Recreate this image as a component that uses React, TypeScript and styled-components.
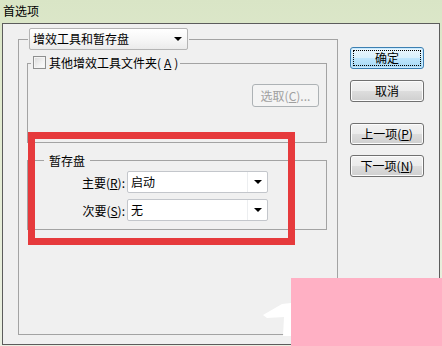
import * as React from 'react'
import styled, { createGlobalStyle } from 'styled-components'

const GlobalStyle = createGlobalStyle`
  html, body {
    margin: 0;
    padding: 0;
  }
  body {
    width: 442px;
    height: 346px;
    overflow: hidden;
    font-family: "Noto Sans CJK SC", "Noto Sans", sans-serif;
    font-size: 12px;
    color: #000;
  }
`

export default function App() {
  return (
    <Window>
      <GlobalStyle />
      <TitleBar>首选项</TitleBar>
      <Client>
        <MainGroup>
          <GroupLegend $inset={9} $pad={1}>
            <HeaderCombo>
              增效工具和暂存盘
              <Arrow $big />
            </HeaderCombo>
          </GroupLegend>
          <MainBody>
            <PluginGroup>
              <GroupLegend $inset={3} $pad={2}>
                <CheckLabel>
                  <CheckBox />
                  其他增效工具文件夹(<u>A</u>)
                </CheckLabel>
              </GroupLegend>
              <PluginBody>
                <SmallButton disabled>
                  选取(<u>C</u>)...
                </SmallButton>
              </PluginBody>
            </PluginGroup>
            <ScratchGroup>
              <GroupLegend $inset={16} $pad={5}>
                <LegendText>暂存盘</LegendText>
              </GroupLegend>
              <ScratchBody>
                <DiskRow>
                  <DiskLabel>
                    主要(<u>R</u>):
                  </DiskLabel>
                  <Combo>
                    <ComboText>启动</ComboText>
                    <ComboButton>
                      <Arrow />
                    </ComboButton>
                  </Combo>
                </DiskRow>
                <DiskRow>
                  <DiskLabel>
                    次要(<u>S</u>):
                  </DiskLabel>
                  <Combo>
                    <ComboText>无</ComboText>
                    <ComboButton>
                      <Arrow />
                    </ComboButton>
                  </Combo>
                </DiskRow>
              </ScratchBody>
            </ScratchGroup>
          </MainBody>
        </MainGroup>
        <ButtonColumn>
          <DialogButton $default $top={0}>
            <ButtonFace $focus>确定</ButtonFace>
          </DialogButton>
          <DialogButton $top={11}>
            <ButtonFace>取消</ButtonFace>
          </DialogButton>
          <DialogButton $top={21}>
            <ButtonFace>
              上一项(<u>P</u>)
            </ButtonFace>
          </DialogButton>
          <DialogButton $top={10}>
            <ButtonFace>
              下一项(<u>N</u>)
            </ButtonFace>
          </DialogButton>
        </ButtonColumn>
      </Client>
      <Highlight />
      <PinkPatch />
      <Watermark width="30" height="40" viewBox="0 0 30 40">
        <polygon points="1,15 20,4 29,3 29,36 21,36 22,17 5,18" fill="#fff" />
      </Watermark>
    </Window>
  )
}

const Window = styled.div`
  position: relative;
  width: 442px;
  height: 346px;
  display: flex;
  flex-direction: column;
  box-sizing: border-box;
  padding: 0 2px 1px 2px;
  background: linear-gradient(180deg, #d9e5c6 0%, #e2ebd0 30%, #ebf0e2 100%);
`

const TitleBar = styled.div`
  height: 23px;
  line-height: 22px;
  padding-left: 1px;
  font-size: 12px;
  color: #000;
  flex: none;
`

const Client = styled.div`
  flex: 1;
  display: flex;
  gap: 12px;
  border: 1px solid #5c5c5c;
  background: #f0f0f0;
  padding: 4px 15px 9px 15px;
  min-height: 0;
`

const GroupBox = styled.fieldset`
  margin: 0;
  padding: 0;
  min-width: 0;
  border: 1px solid #a3a3a3;
`

const GroupLegend = styled.legend<{ $inset: number; $pad: number }>`
  margin-left: ${p => p.$inset}px;
  padding: 0 ${p => p.$pad}px;
  line-height: 15px;
`

const MainGroup = styled(GroupBox)`
  width: 320px;
  box-sizing: border-box;
  flex: none;
`

const MainBody = styled.div`
  padding: 5px 10px 0 8px;
  display: flex;
  flex-direction: column;
`

const HeaderCombo = styled.div`
  width: 159px;
  height: 22px;
  box-sizing: border-box;
  display: flex;
  align-items: center;
  justify-content: space-between;
  padding: 0 3px 0 3px;
  border: 1px solid #b4b4b4;
  border-radius: 2px;
  background: linear-gradient(180deg, #ffffff 0%, #f5f5f5 60%, #ebebeb 100%);
  line-height: 20px;
`

const Arrow = styled.span<{ $big?: boolean }>`
  width: 0;
  height: 0;
  border-left: 4px solid transparent;
  border-right: 4px solid transparent;
  border-top: 4px solid #000;
  margin-right: ${p => (p.$big ? 2 : 0)}px;
`

const PluginGroup = styled(GroupBox)``

const CheckLabel = styled.span`
  display: inline-flex;
  align-items: center;
  gap: 3px;
  line-height: 15px;
  height: 15px;
`

const CheckBox = styled.span`
  width: 13px;
  height: 13px;
  box-sizing: border-box;
  border: 1px solid #8e8f8f;
  background: linear-gradient(135deg, #d9d9d9 0%, #f2f2f2 60%, #fdfdfd 100%);
  box-shadow: inset 0 0 0 1px #f4f4f4;
`

const PluginBody = styled.div`
  display: flex;
  justify-content: flex-end;
  padding: 13px 7px 35px 0;
`

const SmallButton = styled.button`
  width: 67px;
  height: 23px;
  box-sizing: border-box;
  padding: 0;
  font: inherit;
  font-size: 12px;
  color: #a0a0a0;
  border: 1px solid #adb2b5;
  border-radius: 3px;
  background: #f4f4f4;
`

const ScratchGroup = styled(GroupBox)`
  margin-top: 10px;
`

const LegendText = styled.span`
  line-height: 15px;
`

const ScratchBody = styled.div`
  display: flex;
  flex-direction: column;
  gap: 6px;
  padding: 3px 0 8px 0;
`

const DiskRow = styled.div`
  display: flex;
  align-items: center;
  gap: 2px;
`

const DiskLabel = styled.span`
  width: 97px;
  text-align: right;
  line-height: 15px;
`

const Combo = styled.div`
  width: 141px;
  height: 22px;
  box-sizing: border-box;
  display: flex;
  border: 1px solid #c3c6cb;
  border-radius: 2px;
  background: #fff;
`

const ComboText = styled.span`
  flex: 1;
  padding-left: 3px;
  line-height: 20px;
`

const ComboButton = styled.span`
  width: 19px;
  display: flex;
  align-items: center;
  justify-content: center;
  border-left: 1px solid #eceef0;
`

const ButtonColumn = styled.div`
  display: flex;
  flex-direction: column;
  width: 74px;
  padding-top: 19px;
`

const DialogButton = styled.div<{ $default?: boolean; $top: number }>`
  height: 22px;
  box-sizing: border-box;
  margin-top: ${p => p.$top}px;
  padding: 2px;
  display: flex;
  border: 1px solid ${p => (p.$default ? '#3c7fb1' : '#707070')};
  border-radius: 3px;
  background: ${p =>
    p.$default
      ? 'linear-gradient(180deg, #eaf6fd 0%, #d9f0fc 50%, #bee6fd 51%, #a7d9f5 100%)'
      : 'linear-gradient(180deg, #f2f2f2 0%, #ebebeb 50%, #dddddd 51%, #cfcfcf 100%)'};
  box-shadow: inset 0 0 0 1px ${p => (p.$default ? '#c9eaff' : '#fcfcfc')};
`

const ButtonFace = styled.span<{ $focus?: boolean }>`
  flex: 1;
  display: flex;
  align-items: center;
  justify-content: center;
  border: 1px dotted ${p => (p.$focus ? '#000' : 'transparent')};
  line-height: 14px;
  font-size: 12px;
`

const Highlight = styled.div`
  position: absolute;
  left: 28px;
  top: 132px;
  width: 267px;
  height: 113px;
  box-sizing: border-box;
  border: 7px solid #e63a3c;
`

const PinkPatch = styled.div`
  position: absolute;
  left: 291px;
  top: 278px;
  right: 0;
  bottom: 0;
  background: #ffb0c4;
`

const Watermark = styled.svg`
  position: absolute;
  left: 262px;
  top: 300px;
`
